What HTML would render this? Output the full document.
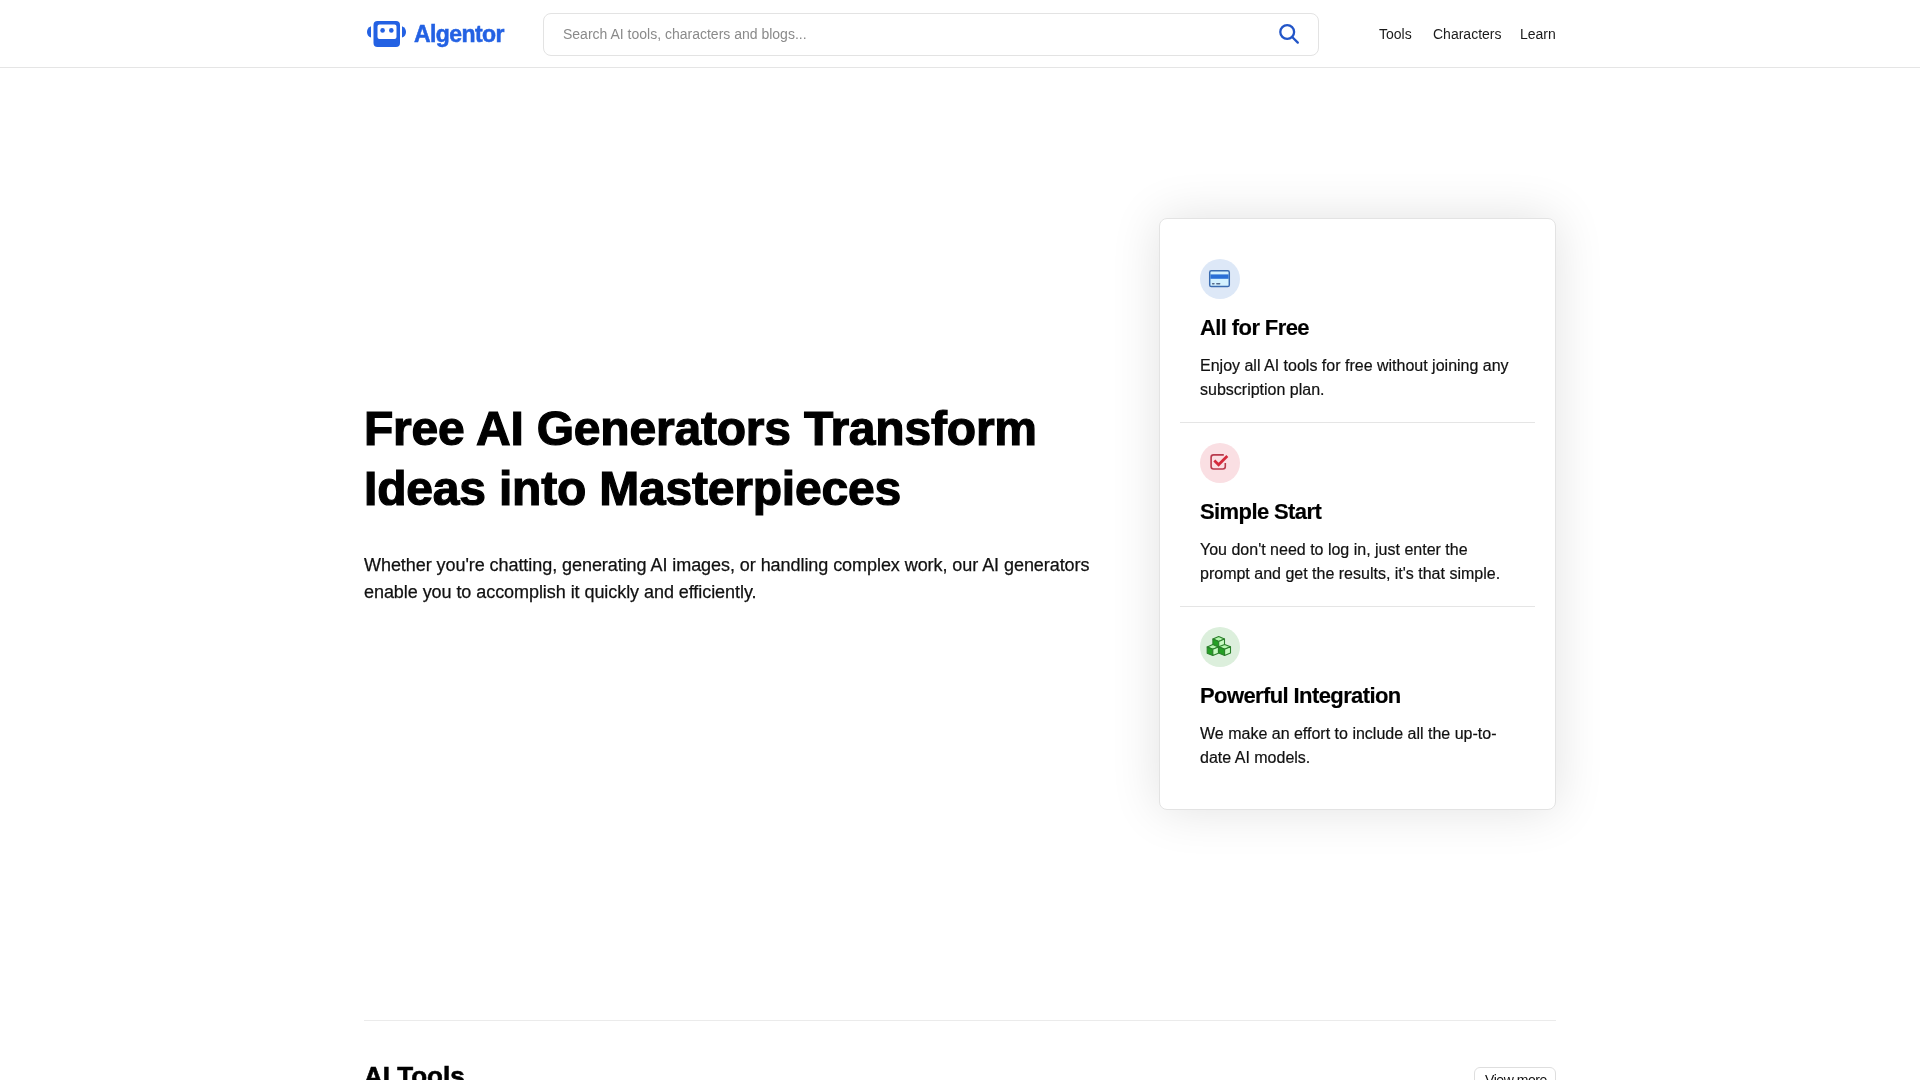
<!DOCTYPE html>
<html>
<head>
<meta charset="utf-8">
<style>
*{box-sizing:border-box;margin:0;padding:0}
html,body{width:1920px;height:1080px;overflow:hidden;background:#fff}
body{font-family:"Liberation Sans",sans-serif;color:#111;position:relative}
.abs{position:absolute}
h1,.lead,.card,.hdr,.h2,.btn{will-change:transform}
.hdr{position:absolute;left:0;top:0;width:1920px;height:68px;border-bottom:1px solid #e5e5e5;background:#fff}
.brand{position:absolute;left:414px;top:18.5px;font-size:23px;font-weight:bold;color:#2361e3;letter-spacing:-0.6px;line-height:30px;white-space:nowrap;-webkit-text-stroke:0.5px #2361e3}
.search{position:absolute;left:543px;top:13px;width:776px;height:43px;border:1px solid #e3e3e3;border-radius:8px;background:#fff}
.ph{position:absolute;left:19px;top:10px;font-size:14px;line-height:20px;color:#8a8a8a;white-space:nowrap}
.nav{position:absolute;top:24px;font-size:14px;line-height:20px;color:#1a1a1a;white-space:nowrap}
h1{position:absolute;left:364px;top:399px;font-size:48px;line-height:60px;font-weight:bold;letter-spacing:-0.2px;color:#000;white-space:nowrap;-webkit-text-stroke:1.2px #000}
.lead{position:absolute;left:364px;top:552px;font-size:18px;line-height:27px;letter-spacing:-0.06px;color:#111;-webkit-text-stroke:0.25px #111;white-space:nowrap}
.card{position:absolute;left:1159px;top:218px;width:397px;height:592px;border:1px solid #e3e3e3;border-radius:8px;background:#fff;padding:20px;box-shadow:0 0 50px rgba(0,0,0,0.12)}
.item{height:184px;padding:20px;border-bottom:1px solid #e5e5e5}
.item:last-child{border-bottom:none;height:183px}
.ic{width:40px;height:40px;border-radius:50%;display:flex;align-items:center;justify-content:center}
.it{margin-top:15px;font-size:22px;line-height:28px;font-weight:bold;color:#000;white-space:nowrap;letter-spacing:-0.6px;-webkit-text-stroke:0.15px #000}
.id{margin-top:12px;font-size:16px;line-height:24px;color:#111;-webkit-text-stroke:0.2px #111;white-space:nowrap}
.sep{position:absolute;left:364px;top:1020px;width:1192px;height:1px;background:#ebebeb}
.h2{position:absolute;left:364px;top:1060px;font-size:26px;line-height:32px;font-weight:bold;color:#000;white-space:nowrap;-webkit-text-stroke:0.6px #000}
.btn{position:absolute;left:1474px;top:1067px;width:82px;height:34px;border:1px solid #dedede;border-radius:6px;font-size:14px;line-height:20px;padding:2px 0 0 10px;color:#111;letter-spacing:-0.45px;white-space:nowrap}
</style>
</head>
<body>
<div class="hdr">
  <svg class="abs" style="left:360px;top:16px" width="50" height="36" viewBox="360 16 50 36">
    <path d="M371 26.3 C368.3 27.3 367 29.5 367 32 C367 34.5 368.3 36.7 371 37.6 Z" fill="#2361e3"/>
    <path d="M402 26.3 C404.7 27.3 406 29.5 406 32 C406 34.5 404.7 36.7 402 37.6 Z" fill="#2361e3"/>
    <path fill-rule="evenodd" fill="#2361e3" d="M377.5 21h18.5a4 4 0 0 1 4 4v18a4 4 0 0 1-4 4h-18.5a4 4 0 0 1-4-4v-18a4 4 0 0 1 4-4z M379.5 24.5h15a2 2 0 0 1 2 2v10.5a2 2 0 0 1-2 2h-15a2 2 0 0 1-2-2v-10.5a2 2 0 0 1 2-2z"/>
    <circle cx="382.6" cy="30.4" r="2.3" fill="#2361e3"/>
    <circle cx="391.3" cy="30.4" r="2.3" fill="#2361e3"/>
  </svg>
  <div class="brand">Algentor</div>
  <div class="search">
    <div class="ph">Search AI tools, characters and blogs...</div>
    <svg class="abs" style="left:731px;top:6px" width="28" height="28" viewBox="0 0 28 28">
      <circle cx="12.2" cy="12" r="6.9" fill="none" stroke="#2255c8" stroke-width="2.3"/>
      <line x1="17.2" y1="17" x2="22.8" y2="22.6" stroke="#2255c8" stroke-width="2.3" stroke-linecap="round"/>
    </svg>
  </div>
  <div class="nav" style="left:1379px">Tools</div>
  <div class="nav" style="left:1433px">Characters</div>
  <div class="nav" style="left:1520px">Learn</div>
</div>

<h1>Free AI Generators Transform<br>Ideas into Masterpieces</h1>
<div class="lead">Whether you're chatting, generating AI images, or handling complex work, our AI generators<br>enable you to accomplish it quickly and efficiently.</div>

<div class="card">
  <div class="item">
    <div class="ic" style="background:#dde8f7"></div>
    <div class="it">All for Free</div>
    <div class="id">Enjoy all AI tools for free without joining any<br>subscription plan.</div>
  </div>
  <div class="item">
    <div class="ic" style="background:#fadfe3"></div>
    <div class="it">Simple Start</div>
    <div class="id">You don't need to log in, just enter the<br>prompt and get the results, it's that simple.</div>
  </div>
  <div class="item">
    <div class="ic" style="background:#dcefdc"></div>
    <div class="it">Powerful Integration</div>
    <div class="id">We make an effort to include all the up-to-<br>date AI models.</div>
  </div>
</div>

<svg class="abs" style="left:0;top:0;pointer-events:none" width="1920" height="1080" viewBox="0 0 1920 1080">
  <g>
    <rect x="1209.7" y="270.8" width="19.6" height="15.7" rx="1.6" fill="#d3f1ff" stroke="#3a6bb0" stroke-width="1.45"/>
    <rect x="1210.4" y="274.4" width="18.2" height="4.4" fill="#2a6fd6"/>
    <rect x="1211.9" y="283" width="2.8" height="1.4" rx="0.7" fill="#566b8c"/>
    <rect x="1216.1" y="283" width="4.3" height="1.4" rx="0.7" fill="#566b8c"/>
  </g>
  <g fill="none">
    <path d="M1223.8 454.9H1213.6a2.5 2.5 0 0 0-2.5 2.5V466.5a2.5 2.5 0 0 0 2.5 2.5H1222.8a2.5 2.5 0 0 0 2.5-2.5V463.1" stroke="#b83a4c" stroke-width="1.6"/>
    <path d="M1214.3 460.4L1218.6 464.7L1227.3 456" stroke="#d42a3c" stroke-width="2.8"/>
  </g>
  <g stroke="#2a7f2a" stroke-width="1.1" stroke-linejoin="round"><path d="M1218.7 636.6L1224.5 639.0L1218.7 641.4L1212.9 639.0Z" fill="#b6f6b0"/><path d="M1212.9 639.0L1218.7 641.4L1218.7 647.6999999999999L1212.9 645.3Z" fill="#24a024"/><path d="M1218.7 641.4L1224.5 639.0L1224.5 645.3L1218.7 647.6999999999999Z" fill="#c8fbc2"/><path d="M1212.8 644.6L1218.3999999999999 646.9L1212.8 649.2L1207.2 646.9Z" fill="#b6f6b0"/><path d="M1207.2 646.9L1212.8 649.2L1212.8 655.5L1207.2 653.1999999999999Z" fill="#24a024"/><path d="M1212.8 649.2L1218.3999999999999 646.9L1218.3999999999999 653.1999999999999L1212.8 655.5Z" fill="#c8fbc2"/><path d="M1224.6 644.4L1230.5 646.8L1224.6 649.1999999999999L1218.6999999999998 646.8Z" fill="#b6f6b0"/><path d="M1218.6999999999998 646.8L1224.6 649.1999999999999L1224.6 655.4999999999999L1218.6999999999998 653.0999999999999Z" fill="#24a024"/><path d="M1224.6 649.1999999999999L1230.5 646.8L1230.5 653.0999999999999L1224.6 655.4999999999999Z" fill="#c8fbc2"/></g>
</svg>
<div class="sep"></div>
<div class="h2">AI Tools</div>
<div class="btn">View more</div>
</body>
</html>
